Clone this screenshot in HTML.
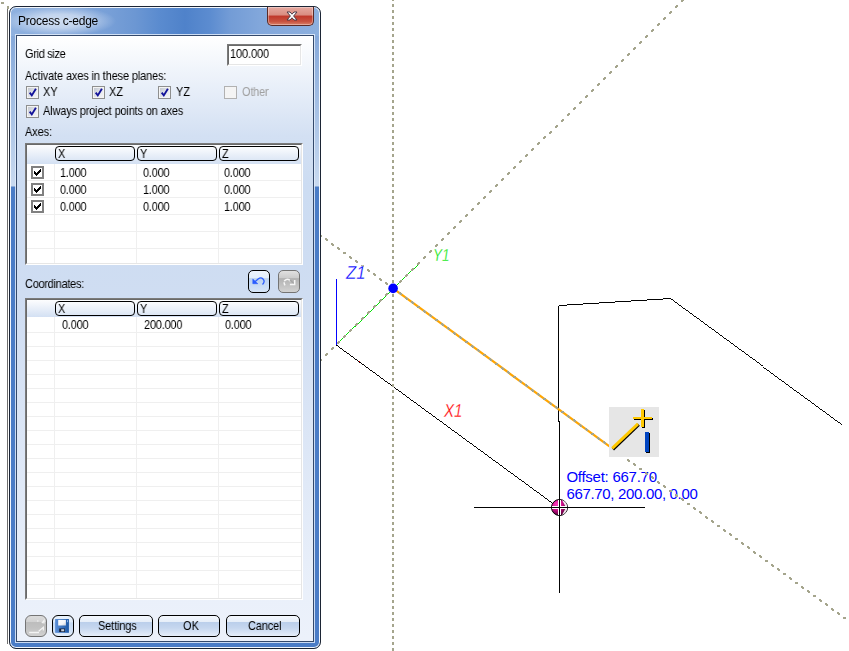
<!DOCTYPE html>
<html><head><meta charset="utf-8"><title>Process c-edge</title>
<style>
html,body{margin:0;padding:0;background:#fff;}
body{width:849px;height:651px;position:relative;overflow:hidden;font-family:"Liberation Sans",Arial,sans-serif;font-size:11px;color:#000;}
.a{position:absolute;}
.t{position:absolute;white-space:nowrap;line-height:13px;height:13px;will-change:transform;font-size:12.4px;transform:scaleX(.887);transform-origin:0 0;}
#scene{position:absolute;left:0;top:0;}
#win{left:9px;top:6px;width:312px;height:643px;box-sizing:border-box;border:1px solid #1c2535;border-radius:7px;
 background:
  radial-gradient(ellipse 56px 15px at 50px 14px,rgba(255,255,255,.62) 0%,rgba(255,255,255,.5) 45%,rgba(255,255,255,.18) 80%,rgba(255,255,255,0) 100%) 0 0/100% 29px no-repeat,
  linear-gradient(90deg,#8fb1df 0px,#86aadc 40px,#779fd7 100px,#6c97d3 125px,#5a8bcf 150px,#4f82ca 175px,#5c8cd0 200px,#739cd6 220px,#82a7db 250px,#8db0de 311px) 0 0/100% 29px no-repeat,
  linear-gradient(180deg,#86a9da 0px,#86a9da 30px,#c9daf0 179px,#4a7cc6 180px,#4a7cc6 100%);
 box-shadow:inset 0 0 0 1px #f2f6fc;}
#shl{left:7px;top:9px;width:1px;height:635px;background:#6e6e6e;}
#client{left:16px;top:35px;width:298px;height:607px;box-sizing:border-box;border:1px solid #34496b;
 background:linear-gradient(180deg,#ffffff 0px,#d3e0f3 100px,#ccdcf2 150px,#cfddf2 260px,#eaf0fa 560px,#ecf1fa 605px);
 box-shadow:0 0 0 1px rgba(226,236,250,.85);}
#title{left:18px;top:14px;font-size:12px;transform:none;line-height:15px;height:15px;color:#000;letter-spacing:-0.24px;}
#close{left:267px;top:7px;width:47px;height:19px;box-sizing:border-box;border:1px solid #5b2a25;border-top:none;border-radius:0 0 5px 5px;
 background:linear-gradient(180deg,#e6a9a0 0%,#d98c80 45%,#c0372a 50%,#c8523f 80%,#d98068 100%);
 box-shadow:inset 0 0 0 1px rgba(255,255,255,.35);}
.sunk{box-sizing:border-box;background:#fff;border:1px solid;border-color:#7a7a7a #fff #fff #7a7a7a;}
.sunk:before{content:"";position:absolute;left:0;top:0;right:0;bottom:0;border:1px solid;border-color:#696969 #e6e6e6 #e6e6e6 #696969;}
.cb{width:13px;height:13px;box-sizing:border-box;border:1px solid #8e8f8f;background:linear-gradient(135deg,#bcc2cc,#e8eaee 60%,#f6f7f9);box-shadow:inset 0 0 0 1px #f4f4f4;}
.cb.dis{border-color:#b1b1b1;background:#f4f4f4;}
.cb svg{position:absolute;left:0;top:0;}
.ccb{width:13px;height:13px;box-sizing:border-box;border:2px solid #808080;background:#fff;}
.hd{box-sizing:border-box;border:1px solid #000;border-radius:4px;height:15px;background:linear-gradient(180deg,#fbfcfe,#dde7f5);}
.hdbg{background:linear-gradient(180deg,#fdfdfe,#d3e0f3);}
.btn{box-sizing:border-box;border:1px solid #000;border-radius:5px;height:22px;
 background:linear-gradient(180deg,#f4f8fd 0%,#e6eef9 29%,#bbcfeb 32%,#c6d7ef 60%,#e6eef9 100%);}
.gl{background:#efefef;}
</style></head><body>
<svg id="scene" width="849" height="651" viewBox="0 0 849 651">
<rect x="1" y="2" width="3" height="2" fill="#a5a58d"/><rect x="7" y="6" width="2" height="3" fill="#a5a58d"/>
<g shape-rendering="crispEdges" fill="none">
<line x1="336.4" y1="345.1" x2="434" y2="416.5" stroke="#ff0000" stroke-width="0.99"/>
<polyline points="336.4,345.1 558.5,507.6" stroke="#000" stroke-width="0.99"/>
<polyline points="558.5,421.5 558.5,305.5 669.5,298.5 842,424.8" stroke="#000" stroke-width="0.99"/>
<line x1="559.5" y1="421" x2="559.5" y2="593" stroke="#000" stroke-width="0.99"/>
<line x1="474" y1="507.5" x2="645" y2="507.5" stroke="#000" stroke-width="0.99"/>
<line x1="336.5" y1="279" x2="336.5" y2="345" stroke="#0000ff" stroke-width="0.99"/>
<line x1="336.8" y1="344.4" x2="420" y2="262.6" stroke="#00e000" stroke-width="0.99"/>
</g>
<line x1="393.00" y1="288.40" x2="393.00" y2="-3.00" stroke="#a5a58d" stroke-width="2" stroke-dasharray="3.000 3.000" stroke-dashoffset="-5.100" shape-rendering="crispEdges"/>
<line x1="393.00" y1="288.40" x2="393.00" y2="655.00" stroke="#a5a58d" stroke-width="2" stroke-dasharray="3.000 3.000" stroke-dashoffset="0.100" shape-rendering="crispEdges"/>
<path shape-rendering="crispEdges" fill="#a5a58d" d="M319 234h2v2h-2zM320 235h2v2h-2zM325 238h2v2h-2zM326 239h2v2h-2zM331 243h2v2h-2zM332 244h2v2h-2zM337 247h2v2h-2zM338 248h2v2h-2zM343 252h3v2h-3zM349 256h2v2h-2zM350 257h2v2h-2zM355 260h2v2h-2zM356 261h2v2h-2zM361 265h3v2h-3zM367 269h2v2h-2zM368 270h2v2h-2zM373 273h2v2h-2zM374 274h2v2h-2zM379 278h2v2h-2zM380 279h2v2h-2zM385 282h2v2h-2zM386 283h2v2h-2z"/>
<path shape-rendering="crispEdges" fill="#a5a58d" d="M319 360h2v2h-2zM320 359h2v2h-2zM325 354h2v2h-2zM326 353h2v2h-2zM331 348h2v2h-2zM332 347h2v2h-2zM337 342h2v2h-2zM338 341h2v2h-2zM343 336h2v2h-2zM344 335h2v2h-2zM349 330h2v2h-2zM350 329h2v2h-2zM355 324h2v2h-2zM356 323h2v2h-2zM361 318h2v2h-2zM362 317h2v2h-2zM367 312h2v2h-2zM368 311h2v2h-2zM373 306h2v2h-2zM374 305h2v2h-2zM379 300h2v2h-2zM380 299h2v2h-2zM385 294h2v2h-2zM386 293h2v2h-2z"/>
<path shape-rendering="crispEdges" fill="#a5a58d" d="M399 281h2v2h-2zM400 280h2v2h-2zM405 275h2v2h-2zM406 274h2v2h-2zM411 269h2v2h-2zM412 268h2v2h-2zM417 263h2v2h-2zM418 262h2v2h-2zM423 257h2v2h-2zM424 256h2v2h-2zM429 251h2v2h-2zM430 250h2v2h-2zM435 245h2v2h-2zM436 244h2v2h-2zM441 239h2v2h-2zM442 238h2v2h-2zM447 233h2v2h-2zM448 232h2v2h-2zM453 227h2v2h-2zM454 226h2v2h-2zM459 221h2v2h-2zM460 220h2v2h-2zM465 215h2v2h-2zM466 214h2v2h-2zM471 209h2v2h-2zM472 208h2v2h-2zM477 203h2v2h-2zM478 202h2v2h-2zM483 197h2v2h-2zM484 196h2v2h-2zM489 191h2v2h-2zM490 190h2v2h-2zM495 185h2v2h-2zM496 184h2v2h-2zM501 179h2v2h-2zM502 178h2v2h-2zM507 173h2v2h-2zM508 172h2v2h-2zM513 167h2v2h-2zM514 166h2v2h-2zM519 161h2v2h-2zM520 160h2v2h-2zM525 155h2v2h-2zM526 154h2v2h-2zM531 149h2v2h-2zM532 148h2v2h-2zM537 143h2v2h-2zM538 142h2v2h-2zM543 137h2v2h-2zM544 136h2v2h-2zM549 132h2v2h-2zM550 131h2v2h-2zM555 126h2v2h-2zM556 125h2v2h-2zM561 120h2v2h-2zM562 119h2v2h-2zM567 114h2v2h-2zM568 113h2v2h-2zM573 108h2v2h-2zM574 107h2v2h-2zM579 102h2v2h-2zM580 101h2v2h-2zM585 96h2v2h-2zM586 95h2v2h-2zM591 90h2v2h-2zM592 89h2v2h-2zM597 84h2v2h-2zM598 83h2v2h-2zM603 78h2v2h-2zM604 77h2v2h-2zM609 72h2v2h-2zM610 71h2v2h-2zM615 66h2v2h-2zM616 65h2v2h-2zM621 60h2v2h-2zM622 59h2v2h-2zM627 54h2v2h-2zM628 53h2v2h-2zM633 48h2v2h-2zM634 47h2v2h-2zM639 42h2v2h-2zM640 41h2v2h-2zM645 36h2v2h-2zM646 35h2v2h-2zM651 30h2v2h-2zM652 29h2v2h-2zM657 24h2v2h-2zM658 23h2v2h-2zM663 18h2v2h-2zM664 17h2v2h-2zM669 12h2v2h-2zM670 11h2v2h-2zM675 6h2v2h-2zM676 5h2v2h-2zM681 0h2v2h-2zM682 -1h2v2h-2zM687 -6h2v2h-2zM688 -7h2v2h-2z"/>
<line x1="393.1" y1="288.4" x2="609.5" y2="446.37" stroke="#ffa500" stroke-width="2.2"/>
<g font-family="'Liberation Sans',Arial,sans-serif"><text x="566.4" y="482" font-size="15" fill="#0000ff" textLength="90.6" lengthAdjust="spacing">Offset: 667.70</text>
<text x="566.4" y="499" font-size="15" fill="#0000ff" textLength="131.4" lengthAdjust="spacing">667.70, 200.00, 0.00</text>
</g>
<path shape-rendering="crispEdges" fill="#a5a58d" d="M399 292h2v2h-2zM400 293h2v2h-2zM405 297h2v2h-2zM406 298h2v2h-2zM411 301h2v2h-2zM412 302h2v2h-2zM417 306h3v2h-3zM423 310h2v2h-2zM424 311h2v2h-2zM429 314h2v2h-2zM430 315h2v2h-2zM435 319h3v2h-3zM441 323h2v2h-2zM442 324h2v2h-2zM447 327h2v2h-2zM448 328h2v2h-2zM453 332h2v2h-2zM454 333h2v2h-2zM459 336h2v2h-2zM460 337h2v2h-2zM465 341h3v2h-3zM471 345h2v2h-2zM472 346h2v2h-2zM477 349h2v2h-2zM478 350h2v2h-2zM483 354h3v2h-3zM489 358h2v2h-2zM490 359h2v2h-2zM495 363h3v2h-3zM501 367h2v2h-2zM502 368h2v2h-2zM507 371h2v2h-2zM508 372h2v2h-2zM513 376h3v2h-3zM519 380h2v2h-2zM520 381h2v2h-2zM525 384h2v2h-2zM526 385h2v2h-2zM531 389h2v2h-2zM532 390h2v2h-2zM537 393h2v2h-2zM538 394h2v2h-2zM543 398h3v2h-3zM549 402h2v2h-2zM550 403h2v2h-2zM555 406h2v2h-2zM556 407h2v2h-2zM561 411h3v2h-3zM567 415h2v2h-2zM568 416h2v2h-2zM573 419h2v2h-2zM574 420h2v2h-2zM579 424h2v2h-2zM580 425h2v2h-2zM585 428h2v2h-2zM586 429h2v2h-2zM591 433h3v2h-3zM597 437h2v2h-2zM598 438h2v2h-2zM603 441h2v2h-2zM604 442h2v2h-2zM609 446h3v2h-3zM615 450h2v2h-2zM616 451h2v2h-2zM621 454h2v2h-2zM622 455h2v2h-2zM627 459h2v2h-2zM628 460h2v2h-2zM633 463h2v2h-2zM634 464h2v2h-2zM639 468h3v2h-3zM645 472h2v2h-2zM646 473h2v2h-2zM651 476h2v2h-2zM652 477h2v2h-2zM657 481h2v2h-2zM658 482h2v2h-2zM663 485h2v2h-2zM664 486h2v2h-2zM669 490h3v2h-3zM675 494h2v2h-2zM676 495h2v2h-2zM681 498h2v2h-2zM682 499h2v2h-2zM687 503h3v2h-3zM693 507h2v2h-2zM694 508h2v2h-2zM699 511h2v2h-2zM700 512h2v2h-2zM705 516h2v2h-2zM706 517h2v2h-2zM711 520h2v2h-2zM712 521h2v2h-2zM717 525h3v2h-3zM723 529h2v2h-2zM724 530h2v2h-2zM729 533h2v2h-2zM730 534h2v2h-2zM735 538h3v2h-3zM741 542h2v2h-2zM742 543h2v2h-2zM747 546h2v2h-2zM748 547h2v2h-2zM753 551h2v2h-2zM754 552h2v2h-2zM759 555h2v2h-2zM760 556h2v2h-2zM765 560h3v2h-3zM771 564h2v2h-2zM772 565h2v2h-2zM777 568h2v2h-2zM778 569h2v2h-2zM783 573h3v2h-3zM789 577h2v2h-2zM790 578h2v2h-2zM795 582h3v2h-3zM801 586h2v2h-2zM802 587h2v2h-2zM807 590h2v2h-2zM808 591h2v2h-2zM813 595h3v2h-3zM819 599h2v2h-2zM820 600h2v2h-2zM825 603h2v2h-2zM826 604h2v2h-2zM831 608h2v2h-2zM832 609h2v2h-2zM837 612h2v2h-2zM838 613h2v2h-2zM843 617h3v2h-3zM849 621h2v2h-2zM850 622h2v2h-2z"/>
<circle cx="393.1" cy="288.4" r="4.8" fill="#0000ff"/>
<defs><radialGradient id="mg" cx="0.32" cy="0.3" r="0.75"><stop offset="0" stop-color="#ff3fc0"/><stop offset="0.45" stop-color="#d0108c"/><stop offset="1" stop-color="#4a0030"/></radialGradient></defs>
<circle cx="559.5" cy="507.5" r="8" fill="url(#mg)" stroke="#000" stroke-width="1"/>
<path d="M562 500 A8 8 0 0 1 562 515 L566 507.5 Z" fill="#fff" opacity=".9"/>
<g shape-rendering="crispEdges"><rect x="558" y="500" width="3" height="15" fill="#fff"/><rect x="552" y="506" width="15" height="3" fill="#fff"/>
<line x1="559.5" y1="499" x2="559.5" y2="516" stroke="#000"/><line x1="551" y1="507.5" x2="568" y2="507.5" stroke="#000"/></g>
<rect x="609" y="407" width="50" height="50" fill="#e6e6e6"/>
<line x1="613" y1="449.3" x2="638.8" y2="424.7" stroke="#000" stroke-width="3"/>
<line x1="612.2" y1="448.4" x2="638" y2="423.8" stroke="#ffc800" stroke-width="3"/>
<g shape-rendering="crispEdges">
<rect x="641.6" y="409.6" width="3" height="18" fill="#000"/><rect x="633.6" y="417.6" width="19" height="2.4" fill="#000"/>
<rect x="641" y="409" width="3" height="18" fill="#ffc800"/><rect x="633" y="417" width="19" height="2" fill="#ffc800"/>
<rect x="646" y="433" width="4" height="20" fill="#000"/><rect x="645" y="432" width="3.5" height="20" fill="#0044c0"/>
</g>
<g font-family="'Liberation Sans',Arial,sans-serif">
<text x="346" y="278.6" font-size="18" font-style="italic" fill="#0000ff" textLength="19.5" lengthAdjust="spacingAndGlyphs" stroke="#fff" stroke-width="0.3">Z1</text>
<text x="433" y="261" font-size="16.5" font-style="italic" fill="#00e400" textLength="16.5" lengthAdjust="spacingAndGlyphs" stroke="#fff" stroke-width="0.3">Y1</text>
<text x="444" y="416.6" font-size="18" font-style="italic" fill="#ff0000" textLength="18.5" lengthAdjust="spacingAndGlyphs" stroke="#fff" stroke-width="0.3">X1</text>
</g>
</svg>
<div class="a" id="shl"></div>
<div class="a" id="win"></div>
<div class="a" id="client"></div>
<div class="t" id="title">Process c-edge</div>
<div class="a" id="close"></div>
<div class="t" style="left:25px;top:48px;letter-spacing:-0.376px;">Grid size</div>
<div class="a sunk" style="left:227px;top:44px;width:75px;height:22px"></div>
<div class="t" style="left:230px;top:48px;letter-spacing:-0.113px;">100.000</div>
<div class="t" style="left:25px;top:70px;letter-spacing:-0.154px;">Activate axes in these planes:</div>
<div class="a cb" style="left:26px;top:86px"><svg width="11" height="11" viewBox="0 0 11 11"><path d="M2.7 5.6 L4.8 8.4 L8.9 1.8" fill="none" stroke="#14149a" stroke-width="1.9"/></svg></div>
<div class="t" style="left:43px;top:86px;">XY</div>
<div class="a cb" style="left:92px;top:86px"><svg width="11" height="11" viewBox="0 0 11 11"><path d="M2.7 5.6 L4.8 8.4 L8.9 1.8" fill="none" stroke="#14149a" stroke-width="1.9"/></svg></div>
<div class="t" style="left:109px;top:86px;">XZ</div>
<div class="a cb" style="left:158px;top:86px"><svg width="11" height="11" viewBox="0 0 11 11"><path d="M2.7 5.6 L4.8 8.4 L8.9 1.8" fill="none" stroke="#14149a" stroke-width="1.9"/></svg></div>
<div class="t" style="left:175.5px;top:86px;">YZ</div>
<div class="a cb dis" style="left:224px;top:86px"></div>
<div class="t" style="left:241.5px;top:86px;letter-spacing:-0.248px;color:#a0a0a0">Other</div>
<div class="a cb" style="left:26px;top:105px"><svg width="11" height="11" viewBox="0 0 11 11"><path d="M2.7 5.6 L4.8 8.4 L8.9 1.8" fill="none" stroke="#14149a" stroke-width="1.9"/></svg></div>
<div class="t" style="left:43px;top:105px;letter-spacing:-0.179px;">Always project points on axes</div>
<div class="t" style="left:25px;top:126px;letter-spacing:-0.158px;">Axes:</div>
<div class="a sunk" style="left:25px;top:143px;width:278px;height:122px"></div><div class="a hdbg" style="left:27px;top:145px;width:274px;height:19px"></div><div class="a gl" style="left:27px;top:180px;width:274px;height:1px"></div><div class="a gl" style="left:27px;top:197px;width:274px;height:1px"></div><div class="a gl" style="left:27px;top:214px;width:274px;height:1px"></div><div class="a gl" style="left:27px;top:231px;width:274px;height:1px"></div><div class="a gl" style="left:27px;top:248px;width:274px;height:1px"></div><div class="a gl" style="left:54px;top:164px;width:1px;height:99px"></div><div class="a gl" style="left:136px;top:164px;width:1px;height:99px"></div><div class="a gl" style="left:218px;top:164px;width:1px;height:99px"></div><div class="a hd" style="left:55px;top:146px;width:80px"></div><div class="t" style="left:58px;top:148px;">X</div><div class="a hd" style="left:137px;top:146px;width:80px"></div><div class="t" style="left:140px;top:148px;">Y</div><div class="a hd" style="left:219px;top:146px;width:80px"></div><div class="t" style="left:222px;top:148px;">Z</div>
<div class="a ccb" style="left:31px;top:166px"><svg class="a" style="left:0;top:0" width="9" height="9" viewBox="0 0 9 9" shape-rendering="crispEdges"><path d="M1 3v3M2 4v3M3 5v3M4 4v3M5 3v3M6 2v3M7 1v3" stroke="#000" stroke-width="1" transform="translate(0.5,0)"/></svg></div>
<div class="t" style="left:60.4px;top:167px;letter-spacing:-0.271px;">1.000</div>
<div class="t" style="left:143px;top:167px;letter-spacing:-0.271px;">0.000</div>
<div class="t" style="left:224.4px;top:167px;letter-spacing:-0.271px;">0.000</div>
<div class="a ccb" style="left:31px;top:183px"><svg class="a" style="left:0;top:0" width="9" height="9" viewBox="0 0 9 9" shape-rendering="crispEdges"><path d="M1 3v3M2 4v3M3 5v3M4 4v3M5 3v3M6 2v3M7 1v3" stroke="#000" stroke-width="1" transform="translate(0.5,0)"/></svg></div>
<div class="t" style="left:60.4px;top:184px;letter-spacing:-0.271px;">0.000</div>
<div class="t" style="left:143px;top:184px;letter-spacing:-0.271px;">1.000</div>
<div class="t" style="left:224.4px;top:184px;letter-spacing:-0.271px;">0.000</div>
<div class="a ccb" style="left:31px;top:200px"><svg class="a" style="left:0;top:0" width="9" height="9" viewBox="0 0 9 9" shape-rendering="crispEdges"><path d="M1 3v3M2 4v3M3 5v3M4 4v3M5 3v3M6 2v3M7 1v3" stroke="#000" stroke-width="1" transform="translate(0.5,0)"/></svg></div>
<div class="t" style="left:60.4px;top:201px;letter-spacing:-0.271px;">0.000</div>
<div class="t" style="left:143px;top:201px;letter-spacing:-0.271px;">0.000</div>
<div class="t" style="left:224.4px;top:201px;letter-spacing:-0.271px;">1.000</div>
<div class="t" style="left:25px;top:278px;letter-spacing:-0.319px;">Coordinates:</div>
<div class="a" style="left:248px;top:270px;width:22px;height:23px;box-sizing:border-box;border:1px solid #000;border-radius:5px;background:linear-gradient(180deg,#edf4fd 0%,#e4effb 34%,#bdd3ef 36%,#c4d8f2 60%,#d6e5f8 100%)"><svg class="a" style="left:0;top:0" width="20" height="21" viewBox="0 0 20 21"><path d="M3.8 8.1 L3.8 12.7 L8.8 12.7 Z" fill="#2a5cff" stroke="#2a5cff" stroke-width="0.6" stroke-linejoin="round"/><path d="M6 10.8 L9.1 8.1 C10.5 7 12.6 6.6 14 8 C15.6 9.6 15.2 11.8 13.5 13.5" fill="none" stroke="#2a5cff" stroke-width="1.25"/></svg></div>
<div class="a" style="left:278px;top:270px;width:22px;height:23px;box-sizing:border-box;border:1px solid #747474;border-radius:5px;background:linear-gradient(180deg,#e0e0e0 0%,#cbcbcb 34%,#b2b2b2 36%,#c0c0c0 65%,#d2d2d2 100%)"><svg class="a" style="left:0;top:0" width="20" height="21" viewBox="0 0 20 21"><path d="M6 14.4 C4.6 12 4.9 9.8 6.7 8.8 C8.5 7.8 10.4 8.6 11.6 10.2" fill="none" stroke="#f6f6f6" stroke-width="1.5" stroke-dasharray="3.2 1 30"/><path d="M11 9 L15.5 13" stroke="#a6a6a6" stroke-width="1.6"/><path d="M10.9 13.5 L15.7 13.5 L15.7 9.1" fill="none" stroke="#f6f6f6" stroke-width="1.5"/></svg></div>
<div class="a sunk" style="left:25px;top:298px;width:278px;height:302px"></div><div class="a hdbg" style="left:27px;top:300px;width:274px;height:17px"></div><div class="a gl" style="left:27px;top:332px;width:274px;height:1px"></div><div class="a gl" style="left:27px;top:346px;width:274px;height:1px"></div><div class="a gl" style="left:27px;top:360px;width:274px;height:1px"></div><div class="a gl" style="left:27px;top:374px;width:274px;height:1px"></div><div class="a gl" style="left:27px;top:388px;width:274px;height:1px"></div><div class="a gl" style="left:27px;top:402px;width:274px;height:1px"></div><div class="a gl" style="left:27px;top:416px;width:274px;height:1px"></div><div class="a gl" style="left:27px;top:430px;width:274px;height:1px"></div><div class="a gl" style="left:27px;top:444px;width:274px;height:1px"></div><div class="a gl" style="left:27px;top:458px;width:274px;height:1px"></div><div class="a gl" style="left:27px;top:472px;width:274px;height:1px"></div><div class="a gl" style="left:27px;top:486px;width:274px;height:1px"></div><div class="a gl" style="left:27px;top:500px;width:274px;height:1px"></div><div class="a gl" style="left:27px;top:514px;width:274px;height:1px"></div><div class="a gl" style="left:27px;top:528px;width:274px;height:1px"></div><div class="a gl" style="left:27px;top:542px;width:274px;height:1px"></div><div class="a gl" style="left:27px;top:556px;width:274px;height:1px"></div><div class="a gl" style="left:27px;top:570px;width:274px;height:1px"></div><div class="a gl" style="left:27px;top:584px;width:274px;height:1px"></div><div class="a gl" style="left:54px;top:317px;width:1px;height:281px"></div><div class="a gl" style="left:136px;top:317px;width:1px;height:281px"></div><div class="a gl" style="left:218px;top:317px;width:1px;height:281px"></div><div class="a hd" style="left:55px;top:301px;width:80px"></div><div class="t" style="left:58px;top:303px;">X</div><div class="a hd" style="left:137px;top:301px;width:80px"></div><div class="t" style="left:140px;top:303px;">Y</div><div class="a hd" style="left:219px;top:301px;width:80px"></div><div class="t" style="left:222px;top:303px;">Z</div>
<div class="t" style="left:61.6px;top:319px;letter-spacing:-0.271px;">0.000</div>
<div class="t" style="left:143.8px;top:319px;letter-spacing:-0.242px;">200.000</div>
<div class="t" style="left:225.4px;top:319px;letter-spacing:-0.271px;">0.000</div>
<div class="a" style="left:25px;top:615px;width:22px;height:22px;box-sizing:border-box;border:1px solid #747474;border-radius:6px;background:linear-gradient(180deg,#dcdcdc 0%,#d2d2d2 28%,#bdbdbd 31%,#c2c2c2 60%,#d2d2d2 100%)"><svg class="a" style="left:0;top:0" width="20" height="20" viewBox="0 0 20 20"><path d="M3.2 16.5 L13 16.5 M12.7 15.2 L17.3 11.3 L17.3 14.6 M15.9 7.1 L18 4.6 L18 7.4" fill="none" stroke="#f4f4f4" stroke-width="1.3"/><rect x="11.2" y="4.4" width="1.2" height="1.2" fill="#f4f4f4"/></svg></div>
<div class="a" style="left:52px;top:615px;width:22px;height:22px;box-sizing:border-box;border:1px solid #000;border-radius:6px;background:linear-gradient(180deg,#eaf3fc 0%,#dfebfa 30%,#c6daf3 34%,#cfe0f6 70%,#e2edfa 100%)"><svg class="a" style="left:0;top:0" width="20" height="20" viewBox="0 0 20 20"><defs><linearGradient id="fl" x1="0" x2="1" y1="0" y2="0"><stop offset="0" stop-color="#5d90d8"/><stop offset="1" stop-color="#1c58a6"/></linearGradient><linearGradient id="lb" x1="0" x2="1" y1="0" y2="1"><stop offset="0" stop-color="#ffffff"/><stop offset="0.6" stop-color="#f4f6f9"/><stop offset="1" stop-color="#c9cfd8"/></linearGradient></defs><rect x="2.1" y="3" width="13.8" height="13.8" fill="url(#fl)"/><rect x="5.2" y="3.9" width="7.7" height="5.6" fill="url(#lb)"/><rect x="14" y="4.2" width="0.9" height="2" fill="#9fc0ea"/><rect x="6.2" y="12.5" width="5.8" height="3.5" fill="#16223a"/><rect x="8.2" y="13.2" width="3" height="2.1" fill="#c8d0dc"/></svg></div>
<div class="a btn" style="left:79px;top:615px;width:74px"></div>
<div class="t" style="left:98px;top:620px;letter-spacing:-0.155px;">Settings</div>
<div class="a btn" style="left:158px;top:615px;width:62px"></div>
<div class="t" style="left:183px;top:620px;letter-spacing:0.056px;">OK</div>
<div class="a btn" style="left:226px;top:615px;width:74px"></div>
<div class="t" style="left:247.8px;top:620px;letter-spacing:-0.188px;">Cancel</div>
<svg class="a" style="left:283.5px;top:10px" width="16" height="12" viewBox="0 0 16 12"><path d="M3 2 L6 2 L8 4.2 L10 2 L13 2 L9.6 6 L13 10 L10 10 L8 7.8 L6 10 L3 10 L6.4 6 Z" fill="#fff" stroke="#4a3b48" stroke-width="1" stroke-linejoin="round"/></svg>
</body></html>
